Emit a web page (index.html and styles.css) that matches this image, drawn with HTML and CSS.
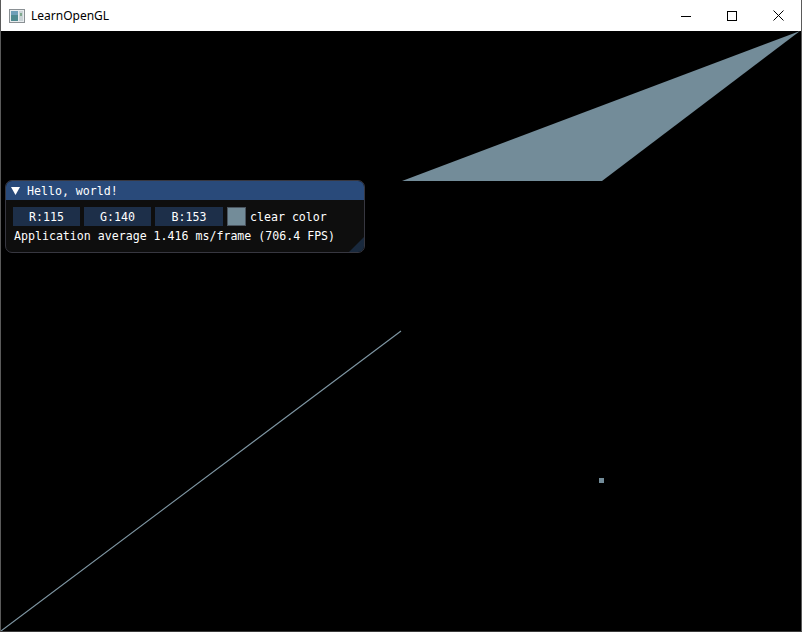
FILE: index.html
```html
<!DOCTYPE html>
<html>
<head>
<meta charset="utf-8">
<title>LearnOpenGL</title>
<link rel="stylesheet" href="styles.css">
</head>
<body>
<div class="window">
  <div class="titlebar">
    <svg class="app-icon" width="16" height="14" viewBox="0 0 16 14">
      <rect x="0.5" y="0.5" width="15" height="13" fill="#e8ecee" stroke="#8a9094"/>
      <rect x="2" y="2" width="7" height="10" fill="#4f8a8f"/>
      <rect x="2" y="2" width="7" height="4" fill="#6f9fb8"/>
      <rect x="10" y="2" width="4" height="10" fill="#c9d3d6"/>
      <rect x="11" y="4" width="2" height="3" fill="#7fa88e"/>
    </svg>
    <span class="title">LearnOpenGL</span>
    <div class="caption-buttons">
      <div class="cbtn"><svg width="10" height="10" viewBox="0 0 10 10"><line x1="0" y1="5.5" x2="10" y2="5.5" stroke="#000" stroke-width="1"/></svg></div>
      <div class="cbtn"><svg width="10" height="10" viewBox="0 0 10 10"><rect x="0.5" y="0.5" width="9" height="9" fill="none" stroke="#000" stroke-width="1"/></svg></div>
      <div class="cbtn"><svg width="11" height="11" viewBox="0 0 11 11"><path d="M0.5 0.5 L10.5 10.5 M10.5 0.5 L0.5 10.5" stroke="#000" stroke-width="1"/></svg></div>
    </div>
  </div>
  <div class="viewport">
    <svg class="scene" width="800" height="600" viewBox="0 0 800 600" shape-rendering="crispEdges">
      <polygon points="401,150 601,150 799,0" fill="#738c99" shape-rendering="auto"/>
      <line x1="0" y1="600" x2="400" y2="300" stroke="#7f97a4" stroke-width="1.1" shape-rendering="auto"/>
      <rect x="598" y="447" width="5" height="5" fill="#738c99"/>
    </svg>
    <div class="imgui">
      <div class="imgui-title"><svg class="arrow" width="9" height="8" viewBox="0 0 9 8"><polygon points="0,0 9,0 4.5,8" fill="#fff"/></svg><span>Hello, world!</span></div>
      <div class="imgui-body">
        <div class="row">
          <div class="frame w67">R:115</div>
          <div class="frame w67">G:140</div>
          <div class="frame w68">B:153</div>
          <div class="swatch"></div>
          <span class="label">clear color</span>
        </div>
        <div class="text">Application average 1.416 ms/frame (706.4 FPS)</div>
      </div>
      <div class="grip"></div>
    </div>
  </div>
</div>
</body>
</html>
```
FILE: styles.css
```css
html, body {
  margin: 0;
  padding: 0;
  background: #000;
}
.window {
  width: 800px;
  height: 631px;
  border-left: 1px solid #5a5a5a;
  border-right: 1px solid #5a5a5a;
  border-bottom: 1px solid #3a3a3a;
  display: flex;
  flex-direction: column;
  background: #000;
}
.titlebar {
  height: 31px;
  background: #fff;
  display: flex;
  align-items: center;
  font-family: "Noto Sans", "Liberation Sans", sans-serif;
  font-size: 12px;
  color: #000;
  flex: none;
}
.app-icon {
  margin-left: 8px;
  flex: none;
}
.title {
  margin-left: 6px;
  margin-top: -1px;
}
.caption-buttons {
  margin-left: auto;
  display: flex;
  height: 31px;
}
.cbtn {
  width: 46px;
  height: 31px;
  display: flex;
  align-items: center;
  justify-content: center;
}
.viewport {
  position: relative;
  width: 800px;
  height: 600px;
  background: #000;
  overflow: hidden;
}
.scene {
  display: block;
}
.imgui {
  position: absolute;
  left: 4px;
  top: 149px;
  width: 358px;
  height: 71px;
  background: #0e0e0e;
  border: 1px solid #373740;
  border-radius: 7px;
  overflow: hidden;
  font-family: "DejaVu Sans Mono", "Liberation Mono", monospace;
  font-size: 11.6px;
  color: #fff;
}
.imgui-title {
  height: 19px;
  background: #294a7a;
  display: flex;
  align-items: center;
  padding-left: 5px;
  gap: 7px;
}
.arrow {
  flex: none;
}
.imgui-body {
  padding: 7px 7px 0 7px;
  display: flex;
  flex-direction: column;
  gap: 4px;
}
.row {
  display: flex;
  align-items: center;
  height: 19px;
  gap: 4px;
}
.frame {
  height: 19px;
  background: #1d2f49;
  display: flex;
  align-items: center;
  justify-content: center;
}
.w67 { width: 67px; }
.w68 { width: 68px; }
.swatch {
  width: 17px;
  height: 17px;
  background: #738c99;
  border: 1px solid #4a5560;
}
.text {
  height: 13px;
  line-height: 13px;
  padding-left: 1px;
}
.grip {
  position: absolute;
  right: 0;
  bottom: 0;
  width: 15px;
  height: 15px;
  background: #19293d;
  clip-path: polygon(100% 0, 100% 100%, 0 100%);
}
```
